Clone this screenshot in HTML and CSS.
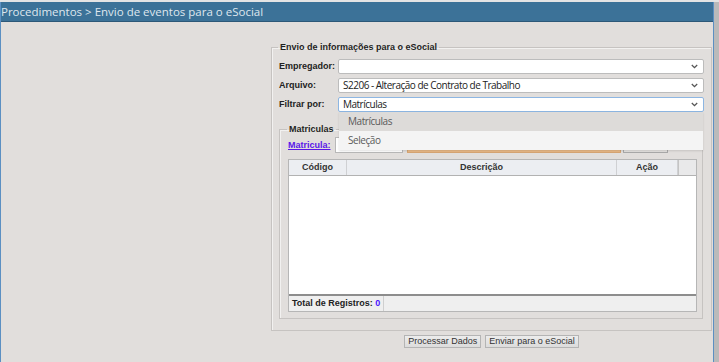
FILE: index.html
```html
<!DOCTYPE html>
<html lang="pt-BR">
<head>
<meta charset="utf-8">
<title>Envio de eventos para o eSocial</title>
<link rel="stylesheet" href="styles.css">
</head>
<body>
<div class="screen">
  <div class="window">
    <div class="titlebar">Procedimentos &gt; Envio de eventos para o eSocial</div>
    <div class="content">
      <fieldset class="box outer">
        <legend>Envio de informações para o eSocial</legend>
        <div class="form">
          <div class="row">
            <span class="label">Empregador:</span>
            <div class="select"><span class="value"></span><svg class="chev" width="7" height="5" viewBox="0 0 7 5"><path d="M0.8 1 L3.5 3.7 L6.2 1" fill="none" stroke="#555" stroke-width="1.3"/></svg></div>
          </div>
          <div class="row">
            <span class="label">Arquivo:</span>
            <div class="select"><span class="value">S2206 - Alteração de Contrato de Trabalho</span><svg class="chev" width="7" height="5" viewBox="0 0 7 5"><path d="M0.8 1 L3.5 3.7 L6.2 1" fill="none" stroke="#555" stroke-width="1.3"/></svg></div>
          </div>
          <div class="row">
            <span class="label">Filtrar por:</span>
            <div class="select focus"><span class="value">Matrículas</span><svg class="chev" width="7" height="5" viewBox="0 0 7 5"><path d="M0.8 1 L3.5 3.7 L6.2 1" fill="none" stroke="#555" stroke-width="1.3"/></svg>
              <ul class="menu">
                <li class="opt active">Matrículas</li>
                <li class="opt">Seleção</li>
              </ul>
            </div>
          </div>
        </div>
        <fieldset class="box inner">
          <legend>Matriculas</legend>
          <div class="mat-row">
            <a class="link" href="#">Matricula:</a>
            <span class="field code"></span>
            <span class="field desc"></span>
            <span class="field btn"></span>
          </div>
          <div class="grid">
            <div class="grid-head">
              <span class="cell c1">Código</span>
              <span class="cell c2">Descrição</span>
              <span class="cell c3">Ação</span>
              <span class="cell c4"></span>
            </div>
            <div class="grid-body"></div>
            <div class="grid-foot"><span class="total">Total de Registros: <span class="count">0</span></span></div>
          </div>
        </fieldset>
      </fieldset>
      <div class="actions">
        <button class="btn-action">Processar Dados</button>
        <button class="btn-action">Enviar para o eSocial</button>
      </div>
    </div>
  </div>
  <div class="scroll"></div>
</div>
</body>
</html>
```
FILE: styles.css
```css
* { box-sizing: border-box; }
html, body { margin: 0; padding: 0; }
body {
  width: 719px;
  height: 362px;
  overflow: hidden;
  background: #e4e4e4;
  font-family: "Liberation Sans", Arial, sans-serif;
}
.screen {
  display: flex;
  height: 362px;
  padding-top: 2px;
}
.window {
  width: 714px;
  display: flex;
  flex-direction: column;
  background: #e1dedc;
  border-left: 1px solid #5b8fc2;
  border-right: 1px solid #5b8fc2;
}
.titlebar {
  height: 20px;
  background: #3c7298;
  border-bottom: 1px solid #2d5878;
  color: #dfe7ee;
  font: 11.5px/19px "Open Sans", "Noto Sans", sans-serif;
  white-space: nowrap;
}
.scroll {
  flex: 1;
  background: #bababa;
}
.content {
  flex: 1;
}
fieldset.box {
  margin: 0;
  min-width: 0;
  border: 1px solid #c6c3c1;
  box-shadow: inset 1px 1px 0 #f2f1f0;
}
legend {
  padding: 0 2px;
  font: bold 9px/11px "Liberation Sans", Arial, sans-serif;
  color: #1f1f1f;
}
.outer {
  margin: 20px 0 0 270px !important;
  width: 441px;
  padding: 6px 7px 11px 7px;
}
.outer > legend { margin-left: -1px; }
.form {
  display: flex;
  flex-direction: column;
  gap: 4px;
}
.row {
  display: flex;
  align-items: center;
  height: 15px;
}
.label {
  width: 59px;
  font: bold 9px/11px "Liberation Sans", Arial, sans-serif;
  color: #222;
}
.select {
  position: relative;
  flex: 1;
  height: 15px;
  display: flex;
  align-items: center;
  justify-content: space-between;
  padding: 0 5px 0 4px;
  background: #fff;
  border: 1px solid #bcbcbc;
  border-radius: 2px;
  font: 10px/13px "Open Sans", "Noto Sans", sans-serif;
  letter-spacing: -0.5px;
  color: #222;
}
.select.focus {
  border-color: #8db6e2;
}
.chev { flex: none; }
.menu {
  position: absolute;
  top: 14px;
  left: 0;
  right: 0;
  margin: 0;
  padding: 0;
  list-style: none;
  background: #f4f4f4;
  box-shadow: 0 1px 2px rgba(0,0,0,0.12);
  z-index: 5;
}
.opt {
  height: 19px;
  padding-left: 9px;
  font: 10px/19px "Open Sans", "Noto Sans", sans-serif;
  letter-spacing: -0.45px;
  color: #5a5a5a;
}
.opt.active {
  background: #dddbd9;
}
.inner {
  margin: 12px 1px 0 0 !important;
  padding: 2px 4px 6px 8px;
}
.inner > legend { margin-left: -1px; }
.mat-row {
  display: flex;
  align-items: center;
  height: 16px;
}
.link {
  width: 47px;
  font: bold 9px/11px "Liberation Sans", Arial, sans-serif;
  color: #5a16e8;
  text-decoration: underline;
}
.field {
  height: 16px;
  border: 1px solid #b8b8b8;
  background: #fff;
}
.field.code { width: 68px; }
.field.desc {
  width: 214px;
  margin-left: 4px;
  background: #e9b987;
  border-color: #d6a573;
}
.field.btn {
  width: 45px;
  margin-left: 2px;
  background: #e3e1df;
  border-color: #a9a9a9;
}
.grid {
  margin-top: 6px;
  height: 153px;
  width: 409px;
  display: flex;
  flex-direction: column;
  border: 1px solid #b6b6b6;
  background: #fff;
}
.grid-head {
  display: flex;
  height: 16px;
  background: #eceef2;
  border-bottom: 1px solid #b2b2b2;
}
.cell {
  border-right: 1px solid #cfd0d3;
  text-align: center;
  font: bold 9px/15px "Liberation Sans", Arial, sans-serif;
  color: #333;
}
.c1 { width: 58px; }
.c2 { width: 270px; }
.c3 { width: 61px; }
.c4 { flex: 1; background: #e9e9ea; border-right: 0; border-left: 1px solid #c4c4c4; }
.grid-body {
  flex: 1;
  background: #fff;
}
.grid-foot {
  height: 17px;
  border-top: 2px solid #8d8d8d;
  background: #efefef;
  padding-left: 3px;
  display: flex;
}
.total {
  padding-right: 3px;
  border-right: 1px solid #cfcfcf;
  font: bold 9px/15px "Liberation Sans", Arial, sans-serif;
  color: #222;
}
.count { color: #4a14ff; }
.actions {
  margin: 4px 0 0 270px;
  width: 441px;
  display: flex;
  justify-content: center;
  gap: 4px;
}
.btn-action {
  height: 13px;
  padding: 0 3px;
  margin: 0;
  font: 9px/11px "Liberation Sans", Arial, sans-serif;
  color: #333;
  background: linear-gradient(#ececec, #dcdcdc);
  border: 1px solid #b4b4b4;
  border-radius: 0;
}
```
